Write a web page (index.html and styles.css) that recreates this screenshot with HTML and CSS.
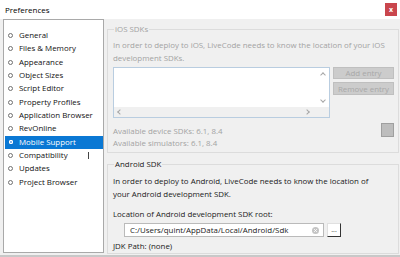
FILE: index.html
```html
<!DOCTYPE html>
<html>
<head>
<meta charset="utf-8">
<link rel="stylesheet" href="styles.css">
</head>
<body>
<div class="window">
  <div class="titlebar">
    <span class="title">Preferences</span>
    <span class="close">x</span>
  </div>
  <div class="main">
    <ul class="sidebar">
      <li class="item"><span class="dot"></span>General</li>
      <li class="item"><span class="dot"></span>Files &amp; Memory</li>
      <li class="item"><span class="dot"></span>Appearance</li>
      <li class="item"><span class="dot"></span>Object Sizes</li>
      <li class="item"><span class="dot"></span>Script Editor</li>
      <li class="item"><span class="dot"></span>Property Profiles</li>
      <li class="item"><span class="dot"></span>Application Browser</li>
      <li class="item"><span class="dot"></span>RevOnline</li>
      <li class="item selected"><span class="dot"></span>Mobile Support</li>
      <li class="item"><span class="dot"></span>Compatibility<span class="caret"></span></li>
      <li class="item"><span class="dot"></span>Updates</li>
      <li class="item"><span class="dot"></span>Project Browser</li>
    </ul>
    <div class="content">
      <fieldset class="group ios">
        <legend>iOS SDKs</legend>
        <p class="desc">In order to deploy to iOS, LiveCode needs to know the location of your iOS<br>development SDKs.</p>
        <div class="sdk-row">
          <div class="listbox">
            <div class="list-area"></div>
            <div class="vscroll"><span class="chev up"></span><span class="chev down"></span></div>
            <div class="hscroll"><span class="chev left"></span><span class="chev right"></span></div>
            <div class="corner"></div>
          </div>
          <div class="buttons">
            <span class="btn">Add entry</span>
            <span class="btn">Remove entry</span>
          </div>
        </div>
        <div class="avail-row">
          <div class="avail">
            <div>Available device SDKs: 6.1, 8.4</div>
            <div>Available simulators: 6.1, 8.4</div>
          </div>
          <span class="checkbox"></span>
        </div>
      </fieldset>
      <fieldset class="group android">
        <legend>Android SDK</legend>
        <p class="desc">In order to deploy to Android, LiveCode needs to know the location of<br>your Android development SDK.</p>
        <div class="label">Location of Android development SDK root:</div>
        <div class="path-row">
          <div class="input">
            <span class="path">C:/Users/quint/AppData/Local/Android/Sdk</span>
            <span class="clear">
              <svg width="7" height="7" viewBox="0 0 8 8"><circle cx="4" cy="4" r="4" fill="#c4c4c4"/><path d="M2.5 2.5 L5.5 5.5 M5.5 2.5 L2.5 5.5" stroke="#fff" stroke-width="1.1"/></svg>
            </span>
          </div>
          <span class="browse">...</span>
        </div>
        <div class="jdk">JDK Path: (none)</div>
      </fieldset>
    </div>
  </div>
</div>
</body>
</html>
```
FILE: styles.css
```css
* { box-sizing: border-box; }
html, body { margin: 0; padding: 0; }
body {
  width: 400px;
  height: 257px;
  overflow: hidden;
  background: #f0f0f0;
  font-family: "Open Sans", "Noto Sans", sans-serif;
  font-size: 7.9px;
  color: #1a1a1a;
}
.window {
  height: 257px;
  display: flex;
  flex-direction: column;
  border-bottom: 2px solid #c8c8c8;
}
.titlebar {
  height: 19px;
  background: #fff;
  display: flex;
  align-items: center;
  justify-content: space-between;
  padding: 0 3px 0 5px;
  flex: none;
}
.title { font-size: 8px; color: #000; }
.close {
  width: 12px;
  height: 13px;
  background: #c9464d;
  color: #fff;
  font-size: 7px;
  font-weight: bold;
  display: flex;
  align-items: center;
  justify-content: center;
  margin-top: -1px;
}
.main {
  flex: 1;
  display: flex;
  padding: 0 3px 1px 3px;
  min-height: 0;
}
.sidebar {
  list-style: none;
  margin: 0;
  padding: 9px 0 0 1px;
  width: 101px;
  height: 234px;
  background: #fff;
  border: 1px solid #a9a9a9;
  flex: none;
}
.item {
  height: 13.33px;
  line-height: 13.33px;
  display: flex;
  align-items: center;
  padding-left: 3px;
  color: #111;
  white-space: nowrap;
}
.item.selected { background: #0a78d4; color: #fff; }
.dot {
  width: 5px;
  height: 5px;
  border: 1px solid #707070;
  border-radius: 50%;
  margin-right: 6px;
  flex: none;
}
.selected .dot { border-color: #fff; background: #8fb8e6; border-radius: 1px; width: 4px; height: 4px; margin-left: 1px; margin-right: 6px; }
.caret {
  display: inline-block;
  width: 1px;
  height: 7px;
  background: #444;
  margin-left: 20px;
}
.content {
  flex: 1;
  display: flex;
  flex-direction: column;
  padding-left: 3px;
  gap: 5px;
  padding-top: 4px;
}
.group {
  margin: 0;
  border: 1px solid #dcdcdc;
  padding: 1px 4px 0 5px;
  min-width: 0;
}
.group legend {
  padding: 0 1px;
  margin-left: 1px;
  line-height: 12px;
}
.ios { color: #a3a3a3; height: 130px; }
.android { color: #1a1a1a; flex: 1; }
.desc {
  margin: 3px 0 0 0;
  line-height: 13px;
  white-space: nowrap;
}
.android .desc { margin-top: 4px; }
.sdk-row {
  display: flex;
  gap: 3px;
  margin-top: 2px;
}
.listbox {
  width: 217px;
  height: 51px;
  border: 1px solid #b9cde0;
  background: #fff;
  display: grid;
  grid-template-columns: 1fr 12px;
  grid-template-rows: 1fr 10px;
  flex: none;
}
.vscroll, .hscroll { display: flex; }
.vscroll { flex-direction: column; justify-content: space-between; align-items: center; padding: 3px 0; }
.hscroll { background: #f0f0f0; justify-content: space-between; align-items: center; padding: 0 8px 0 4px; }
.corner { background: #f0f0f0; }
.chev {
  width: 4px;
  height: 4px;
  border-left: 1px solid #a6a6a6;
  border-top: 1px solid #a6a6a6;
}
.chev.up { transform: rotate(45deg); margin-top: 2px; }
.chev.down { transform: rotate(225deg); margin-bottom: 2px; }
.chev.left { transform: rotate(-45deg); }
.chev.right { transform: rotate(135deg); }
.buttons {
  display: flex;
  flex-direction: column;
  gap: 3px;
}
.btn {
  width: 61px;
  height: 12px;
  background: #cccccc;
  border: 1px solid #bfbfbf;
  color: #a8a8a8;
  display: flex;
  align-items: center;
  justify-content: center;
  line-height: 10px;
}
.btn + .btn { height: 13px; }
.avail-row {
  display: flex;
  justify-content: space-between;
  align-items: flex-start;
  margin-top: 7px;
}
.avail { line-height: 12px; }
.checkbox {
  width: 13px;
  height: 14px;
  background: #bdbdbd;
  border: 1px solid #9f9f9f;
  margin-top: -2px;
}
.label { margin-top: 7px; line-height: 12px; }
.path-row {
  display: flex;
  align-items: stretch;
  gap: 3px;
  margin-top: 3px;
  margin-left: 11px;
}
.input {
  width: 200px;
  height: 14px;
  background: #fff;
  border: 1px solid #bababa;
  display: flex;
  align-items: center;
  justify-content: space-between;
  padding: 0 4px 0 5px;
}
.clear { display: flex; }
.browse {
  width: 14px;
  height: 14px;
  background: #fff;
  border-right: 1px solid #333;
  border-bottom: 1px solid #333;
  border-top: 1px solid #e0e0e0;
  border-left: 1px solid #e0e0e0;
  display: flex;
  align-items: center;
  justify-content: center;
  line-height: 8px;
  font-size: 7px;
  color: #333;
}
.jdk { margin-top: 3px; line-height: 12px; }
```
